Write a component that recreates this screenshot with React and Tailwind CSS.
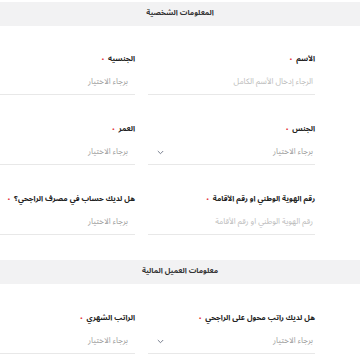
import React from 'react';

function Chevron() {
    return (
        <svg width="7" height="5" viewBox="0 0 7 5" className="text-gray-500">
            <path d="M0.8 1 L3.5 3.7 L6.2 1" fill="none" stroke="currentColor" strokeWidth="0.9" />
        </svg>
    );
}

function Field({ label, placeholder, select, inset }) {
    return (
        <div className="h-[70px] pt-[27px] pb-px flex flex-col">
            <div className="text-[7.5px] leading-[12px] font-bold text-[#222] h-[12px] flex items-center gap-[4px] whitespace-nowrap">
                <span>{label}</span>
                <span className="text-[#e53946] text-[6px]">•</span>
            </div>
            <div className="mt-[10px] h-[14px] flex items-center justify-between">
                <span className={(inset ? 'pr-[7px] ' : 'pr-[2px] ') + (select ? 'text-[#9e9e9e] ' : 'text-[#bdbdbd] ') + 'text-[8px]'}>{placeholder}</span>
                {select && <span className="pl-[9px]"><Chevron /></span>}
            </div>
            <div className="mt-[5px] h-px bg-[#e8e8e8]" />
        </div>
    );
}

function SectionHeader({ title }) {
    return (
        <div className="h-[24px] bg-[#f2f2f3] flex items-center justify-center text-[7.5px] font-bold text-[#333]">
            {title}
        </div>
    );
}

export default function App() {
    const choose = 'برجاء الاختيار';
    return (
        <div dir="rtl" className="w-[360px] h-[360px] overflow-hidden bg-white" style={{ fontFamily: '"Noto Sans Arabic", "DejaVu Sans", sans-serif' }}>
            <div className="pt-[2px]">
                <SectionHeader title="المعلومات الشخصية" />
            </div>
            <div className="grid grid-cols-[167px_167px] gap-x-[13px] pr-[45px]">
                <Field label="الأسم" placeholder="الرجاء إدخال الأسم الكامل" />
                <Field label="الجنسيه" placeholder={choose} select inset />
                <Field label="الجنس" placeholder={choose} select />
                <Field label="العمر" placeholder={choose} select inset />
                <Field label="رقم الهوية الوطني او رقم الأقامة" placeholder="رقم الهوية الوطني او رقم الأقامة" />
                <Field label="هل لديك حساب في مصرف الراجحي؟" placeholder={choose} select inset />
            </div>
            <div className="pt-[24px]">
                <SectionHeader title="معلومات العميل المالية" />
            </div>
            <div className="grid grid-cols-[167px_167px] gap-x-[13px] pr-[45px] pt-px">
                <Field label="هل لديك راتب محول على الراجحي" placeholder={choose} select />
                <Field label="الراتب الشهري" placeholder={choose} select inset />
            </div>
        </div>
    );
}
